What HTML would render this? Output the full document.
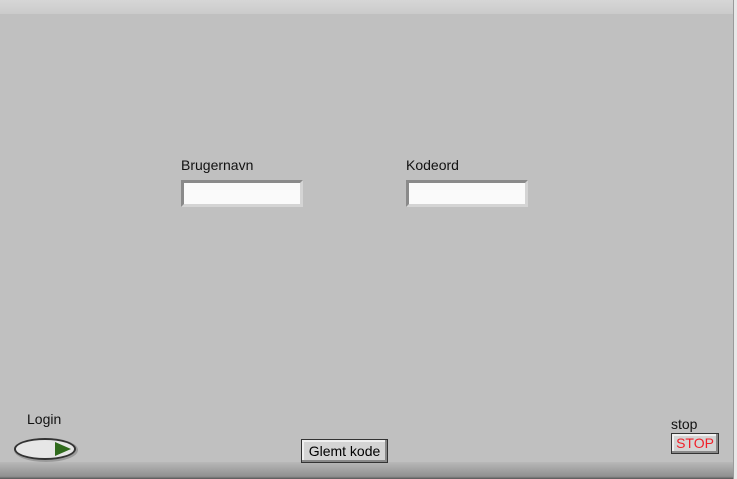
<!DOCTYPE html>
<html><head><meta charset="utf-8"><style>
html,body{margin:0;padding:0;width:737px;height:479px;overflow:hidden;background:#e8e8e8;font-family:"Liberation Sans",sans-serif}
#p{position:absolute;left:0;top:0;width:733px;height:479px;background:#c0c0c0;border-right:1px solid #9a9a9a}
#top{position:absolute;left:0;top:0;width:733px;height:14px;background:linear-gradient(#d6d6d6,#cbcbcb)}
#bot{position:absolute;left:0;top:462px;width:733px;height:17px;background:linear-gradient(#b8b8b8,#909090 85%,#555)}
.lbl{position:absolute;font-size:14px;color:#111}
.in{position:absolute;width:116px;height:21px;background:#fafafa;border-top:3px solid #8a8a8a;border-left:3px solid #8a8a8a;border-bottom:3px solid #d4d4d4;border-right:3px solid #d4d4d4;box-sizing:content-box}
.btn{position:absolute;background:#d4d4d4;border:1px solid #333;box-shadow:inset -2px -2px 0 #888,inset 2px 2px 0 #f0f0f0;font-size:14px;text-align:center;box-sizing:border-box}
</style></head><body>
<div id="p"></div><div id="top"></div><div id="bot"></div>
<div class="lbl" style="left:181px;top:157px">Brugernavn</div>
<div class="in" style="left:181px;top:180px"></div>
<div class="lbl" style="left:406px;top:157px">Kodeord</div>
<div class="in" style="left:406px;top:180px"></div>
<div class="lbl" style="left:27px;top:411px">Login</div>
<svg style="position:absolute;left:12px;top:435px" width="70" height="30"><ellipse cx="34" cy="15" rx="32" ry="12" fill="#9a9a9a"/><ellipse cx="33" cy="14" rx="31" ry="11" fill="#333"/><ellipse cx="33" cy="14" rx="29" ry="9" fill="#e6e6e6"/><path d="M43 7 L59 14 L43 21 Z" fill="#2f6a1c"/></svg>
<div class="btn" style="left:301px;top:439px;width:87px;height:24px;line-height:22px">Glemt kode</div>
<div class="lbl" style="left:671px;top:416px">stop</div>
<div class="btn" style="left:671px;top:433px;width:48px;height:21px;line-height:19px;color:#f0202a">STOP</div>
</body></html>
